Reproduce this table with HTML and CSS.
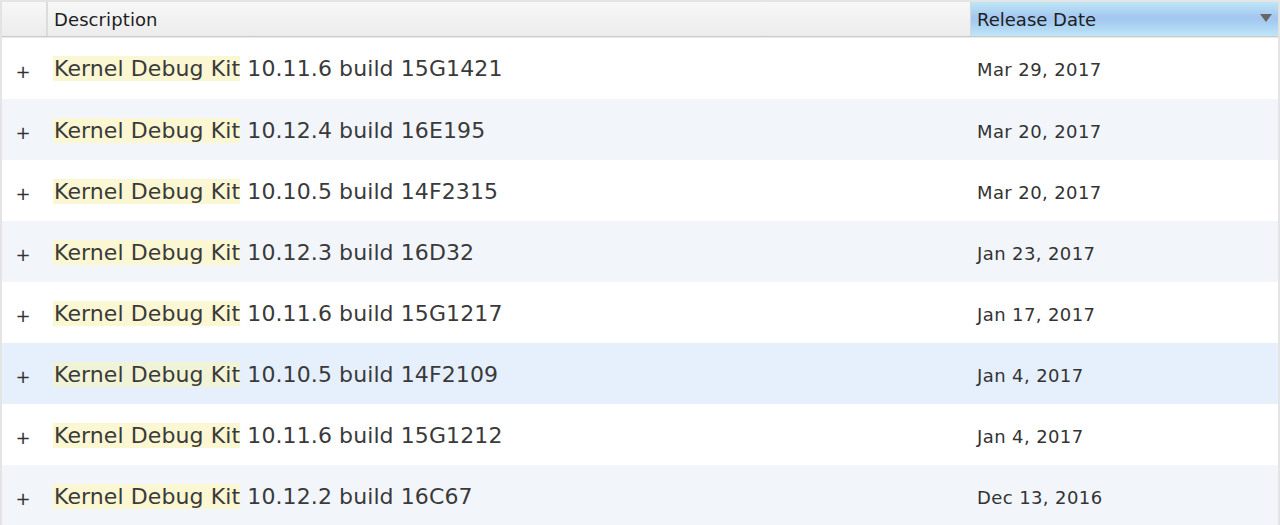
FILE: index.html
```html
<!DOCTYPE html>
<html>
<head>
<meta charset="utf-8">
<link rel="stylesheet" href="styles.css">
</head>
<body>
<div class="table">
  <div class="head">
    <div class="hcell hfirst"></div>
    <div class="hcell hdesc">Description</div>
    <div class="hcell hdate sorted">Release Date<span class="tri"></span></div>
  </div>
  <div class="row"><div class="plus">+</div><div class="desc"><span class="hl">Kernel Debug Kit</span> 10.11.6 build 15G1421</div><div class="date">Mar 29, 2017</div></div>
  <div class="row alt"><div class="plus">+</div><div class="desc"><span class="hl">Kernel Debug Kit</span> 10.12.4 build 16E195</div><div class="date">Mar 20, 2017</div></div>
  <div class="row"><div class="plus">+</div><div class="desc"><span class="hl">Kernel Debug Kit</span> 10.10.5 build 14F2315</div><div class="date">Mar 20, 2017</div></div>
  <div class="row alt"><div class="plus">+</div><div class="desc"><span class="hl">Kernel Debug Kit</span> 10.12.3 build 16D32</div><div class="date">Jan 23, 2017</div></div>
  <div class="row"><div class="plus">+</div><div class="desc"><span class="hl">Kernel Debug Kit</span> 10.11.6 build 15G1217</div><div class="date">Jan 17, 2017</div></div>
  <div class="row hover"><div class="plus">+</div><div class="desc"><span class="hl">Kernel Debug Kit</span> 10.10.5 build 14F2109</div><div class="date">Jan 4, 2017</div></div>
  <div class="row"><div class="plus">+</div><div class="desc"><span class="hl">Kernel Debug Kit</span> 10.11.6 build 15G1212</div><div class="date">Jan 4, 2017</div></div>
  <div class="row alt"><div class="plus">+</div><div class="desc"><span class="hl">Kernel Debug Kit</span> 10.12.2 build 16C67</div><div class="date">Dec 13, 2016</div></div>
</div>
</body>
</html>
```
FILE: styles.css
```css
html, body {
  margin: 0;
  padding: 0;
  background: #ffffff;
}
body {
  font-family: "DejaVu Sans", "Liberation Sans", sans-serif;
  color: #333333;
  overflow: hidden;
}
.table {
  width: 1280px;
  box-sizing: border-box;
  border-top: 2px solid #e4e4e4;
  border-left: 2px solid #e4e4e4;
  border-right: 2px solid #e4e4e4;
}
.head {
  display: grid;
  grid-template-columns: 46px 923px 1fr;
  height: 34px;
  border-bottom: 1px solid #c9c9c9;
  box-shadow: 0 1px 1px rgba(0,0,0,0.08);
  background: linear-gradient(#f7f7f7, #ececec);
  position: relative;
  z-index: 1;
}
.hcell {
  display: flex;
  align-items: center;
  font-size: 18px;
  color: #1e1e1e;
  padding-left: 6px;
  box-sizing: border-box;
}
.hfirst {
  border-right: 2px solid #dcdcdc;
  padding: 0;
}
.hdesc {
  border-right: 1px solid #d6d6d6;
  letter-spacing: 0.1px;
}
.sorted {
  background: linear-gradient(#bfe6f6 0%, #a3c7f0 45%, #a6ccf1 60%, #bfe7f6 100%);
  justify-content: space-between;
  padding-right: 6px;
}
.tri {
  width: 0;
  height: 0;
  border-left: 6px solid transparent;
  border-right: 6px solid transparent;
  border-top: 8px solid #666666;
  margin-top: -2px;
}
.row {
  display: grid;
  grid-template-columns: 46px 923px 1fr;
  height: 61px;
  align-items: center;
  background: #ffffff;
}
.row:nth-child(2) {
  height: 62px;
}
.row.alt {
  background: #f2f6fb;
}
.row.hover {
  background: #e6effc;
}
.plus {
  font-size: 18px;
  text-align: center;
  color: #333;
  padding-right: 4px;
  margin-top: 6px;
}
.desc {
  font-size: 22px;
  padding-left: 5px;
  white-space: nowrap;
  color: #3a3a3a;
  margin-top: 1px;
  letter-spacing: 0.1px;
}
.hl {
  background: #fbf7d3;
  padding: 0 0 0 1px;
}
.row.hover .hl {
  background: #f1f3d7;
}
.date {
  font-size: 18px;
  padding-left: 6px;
  letter-spacing: 0.4px;
  margin-top: 3px;
}
```
